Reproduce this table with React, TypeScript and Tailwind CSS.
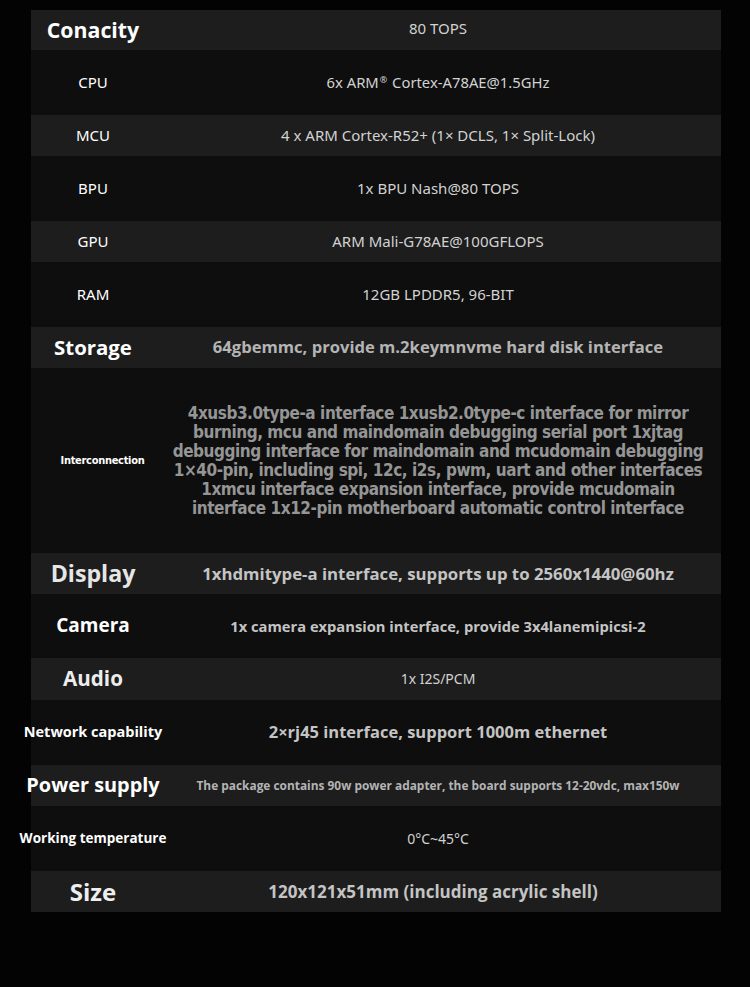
import React from "react";

type Row = {
  label: string;
  labelCls: string;
  value: React.ReactNode;
  valueCls: string;
  h: string;
  light: boolean;
};

const bold = "font-['Open_Sans',sans-serif] font-bold leading-tight";
const reg = "font-['Noto_Sans',sans-serif] font-normal leading-tight";

const rows: Row[] = [
  { label: "Conacity", labelCls: `${bold} text-[21.3px] text-white`, value: "80 TOPS", valueCls: `${reg} text-[15px] text-[#d2d2d2] -mt-1`, h: "h-[40px]", light: true },
  {
    label: "CPU",
    labelCls: `${reg} text-[15px] text-white`,
    value: (
      <>
        6x ARM<span className="text-[9px] align-[5px] mx-[1px]">®</span> Cortex-A78AE@1.5GHz
      </>
    ),
    valueCls: `${reg} text-[14.8px] text-[#d2d2d2]`,
    h: "h-[65px]",
    light: false,
  },
  { label: "MCU", labelCls: `${reg} text-[15px] text-white`, value: "4 x ARM Cortex-R52+ (1× DCLS, 1× Split-Lock)", valueCls: `${reg} text-[15px] text-[#d2d2d2]`, h: "h-[41px]", light: true },
  { label: "BPU", labelCls: `${reg} text-[15px] text-white`, value: "1x BPU Nash@80 TOPS", valueCls: `${reg} text-[15px] text-[#d2d2d2]`, h: "h-[65px]", light: false },
  { label: "GPU", labelCls: `${reg} text-[15px] text-white`, value: "ARM Mali-G78AE@100GFLOPS", valueCls: `${reg} text-[15px] text-[#d2d2d2]`, h: "h-[41px]", light: true },
  { label: "RAM", labelCls: `${reg} text-[15px] text-white`, value: "12GB LPDDR5, 96-BIT", valueCls: `${reg} text-[15px] text-[#d2d2d2]`, h: "h-[65px]", light: false },
  { label: "Storage", labelCls: `${bold} text-[20.4px] text-white`, value: "64gbemmc, provide m.2keymnvme hard disk interface", valueCls: `${bold} text-[16.6px] text-[#b4b4b4]`, h: "h-[41px]", light: true },
  {
    label: "Interconnection",
    labelCls: "font-['DejaVu_Sans_Condensed','DejaVu_Sans',sans-serif] font-bold text-[11px] leading-tight tracking-[-0.3px] text-white ml-[19px]",
    value: (
      <>
        4xusb3.0type-a interface 1xusb2.0type-c interface for mirror
        <br />
        burning, mcu and maindomain debugging serial port 1xjtag
        <br />
        debugging interface for maindomain and mcudomain debugging
        <br />
        1×40-pin, including spi, 12c, i2s, pwm, uart and other interfaces
        <br />
        1xmcu interface expansion interface, provide mcudomain
        <br />
        interface 1x12-pin motherboard automatic control interface
      </>
    ),
    valueCls: "font-['DejaVu_Sans_Condensed','DejaVu_Sans',sans-serif] font-bold text-[17px] leading-[19px] tracking-[-0.45px] text-[#959595] text-center",
    h: "h-[185px]",
    light: false,
  },
  { label: "Display", labelCls: `${bold} text-[23.2px] text-[#e6e6e6]`, value: "1xhdmitype-a interface, supports up to 2560x1440@60hz", valueCls: `${bold} text-[16.8px] text-[#c4c4c4]`, h: "h-[41px]", light: true },
  { label: "Camera", labelCls: `${bold} text-[19px] text-white`, value: "1x camera expansion interface, provide 3x4lanemipicsi-2", valueCls: `${bold} text-[14.7px] text-[#c4c4c4]`, h: "h-[64px]", light: false },
  { label: "Audio", labelCls: `${bold} text-[20.6px] text-[#ededed]`, value: "1x I2S/PCM", valueCls: `${reg} text-[14px] text-[#d2d2d2]`, h: "h-[42px]", light: true },
  { label: "Network capability", labelCls: `${bold} text-[14.5px] text-white`, value: "2×rj45 interface, support 1000m ethernet", valueCls: `${bold} text-[16.5px] text-[#c4c4c4]`, h: "h-[65px]", light: false },
  { label: "Power supply", labelCls: `${bold} text-[19.9px] text-white`, value: "The package contains 90w power adapter, the board supports 12-20vdc, max150w", valueCls: `${bold} text-[11.9px] text-[#b4b4b4]`, h: "h-[41px]", light: true },
  { label: "Working temperature", labelCls: `${bold} text-[13.5px] text-white`, value: "0°C~45°C", valueCls: `${reg} text-[14px] text-[#d2d2d2]`, h: "h-[65px]", light: false },
  { label: "Size", labelCls: `${bold} text-[24px] text-[#eeeeee]`, value: "120x121x51mm (including acrylic shell)", valueCls: `${bold} text-[17px] text-[#c4c4c4] -ml-[10px]`, h: "h-[41px]", light: true },
];

export default function App() {
  return (
    <div className="w-[750px] h-[987px] bg-[#030303] pt-[10px] pl-[31px]">
      <div className="w-[690px] flex flex-col">
        {rows.map((r, i) => (
          <div
            key={i}
            className={`flex ${r.h} ${r.light ? "bg-[#1d1d1d]" : "bg-[#0e0e0e]"}`}
          >
            <div className="w-[124px] shrink-0 flex items-center justify-center">
              <span className={`whitespace-nowrap ${r.labelCls}`}>{r.label}</span>
            </div>
            <div className="flex-1 flex items-center justify-center">
              <div className={`whitespace-nowrap ${r.valueCls}`}>{r.value}</div>
            </div>
          </div>
        ))}
      </div>
    </div>
  );
}
